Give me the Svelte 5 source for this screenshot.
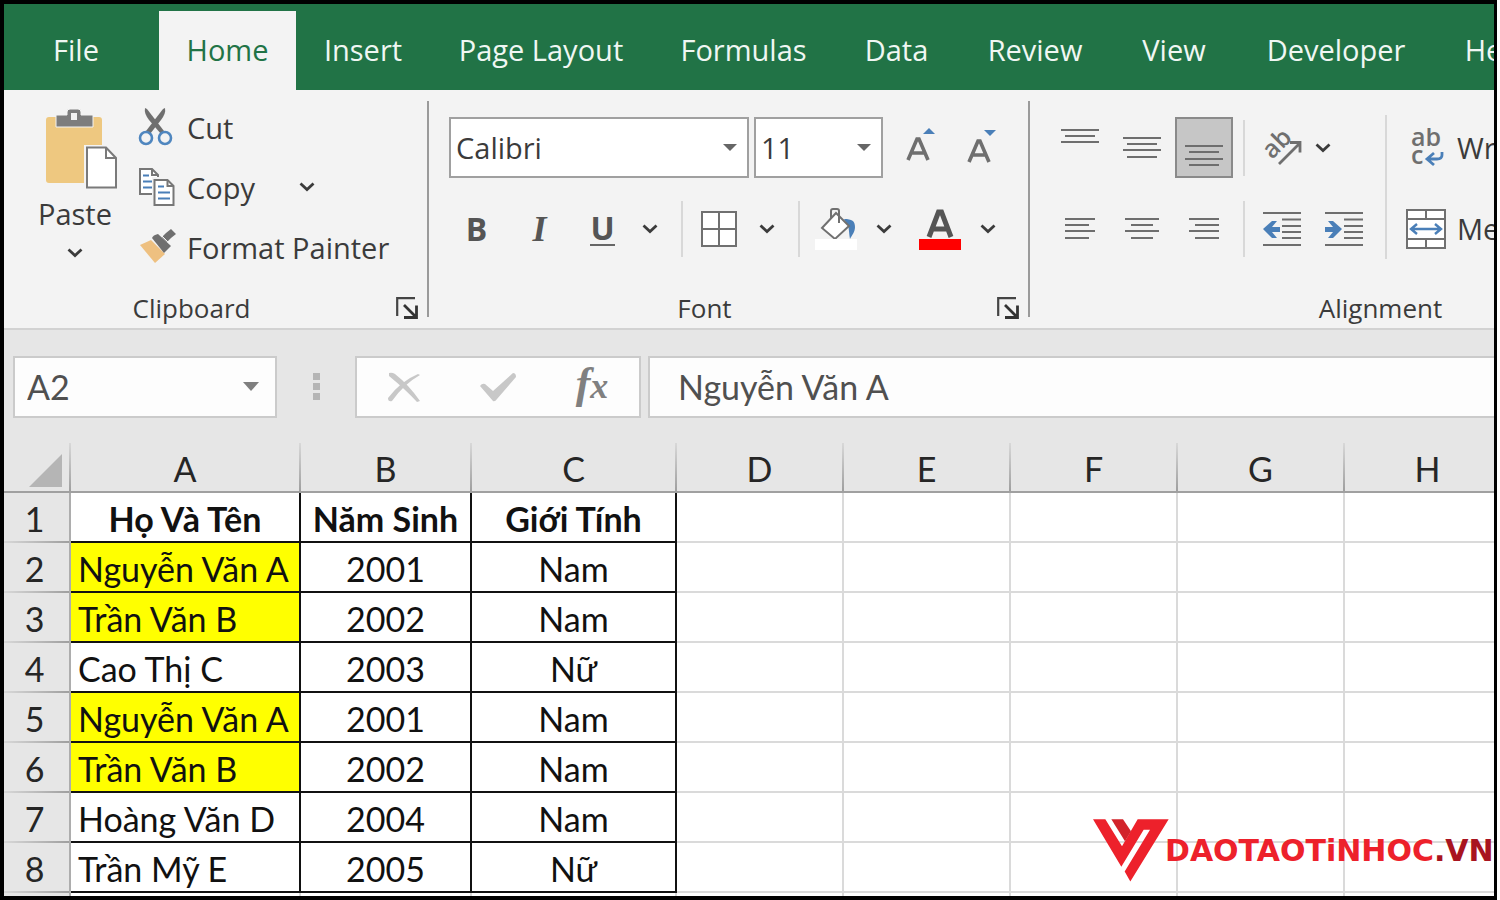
<script>
  const tabs = ['File', 'Home', 'Insert', 'Page Layout', 'Formulas', 'Data', 'Review', 'View', 'Developer', 'Help'];
  const columns = ['A', 'B', 'C', 'D', 'E', 'F', 'G', 'H'];
  const blanks = ['D', 'E', 'F', 'G', 'H'];
  const rows = [
    { name: 'Họ Và Tên', year: 'Năm Sinh', sex: 'Giới Tính', head: true },
    { name: 'Nguyễn Văn A', year: '2001', sex: 'Nam', mark: true },
    { name: 'Trần Văn B', year: '2002', sex: 'Nam', mark: true },
    { name: 'Cao Thị C', year: '2003', sex: 'Nữ' },
    { name: 'Nguyễn Văn A', year: '2001', sex: 'Nam', mark: true },
    { name: 'Trần Văn B', year: '2002', sex: 'Nam', mark: true },
    { name: 'Hoàng Văn D', year: '2004', sex: 'Nam' },
    { name: 'Trần Mỹ E', year: '2005', sex: 'Nữ' }
  ];
  let active = $state('Home');
  let formula = $state('Nguyễn Văn A');
  let cellName = $state('A2');
</script>

{#snippet chevron()}
  <svg width="16" height="10" viewBox="0 0 16 10" aria-hidden="true"><path d="M1.5 1.5 8 7.5 14.5 1.5" fill="none" stroke="#3b3b3b" stroke-width="2.8" /></svg>
{/snippet}

{#snippet launcher(label)}
  <button class="launcher" aria-label={label}>
    <svg width="22" height="22" viewBox="0 0 22 22" aria-hidden="true">
      <path d="M1.2 19V1.2H19" fill="none" stroke="#444" stroke-width="2.2" />
      <path d="M8 8 19 19M20.5 8.5V20.5H8" fill="none" stroke="#333" stroke-width="2.8" />
    </svg>
  </button>
{/snippet}

{#snippet lines(list)}
  <svg width="38" height="40" viewBox="0 0 38 40" aria-hidden="true">
    {#each list as [x, y, w]}<rect {x} {y} width={w} height="2" fill="#6e6e6e" />{/each}
  </svg>
{/snippet}

<div class="window">
  <nav class="tabs" aria-label="Ribbon tabs">
    {#each tabs as tab}
      <button class="tab" class:active={active === tab} onclick={() => (active = tab)}>{tab}</button>
    {/each}
  </nav>

  <section class="ribbon">
    <div class="group clipboard">
      <div class="body">
        <button class="paste">
          <svg width="72" height="81" viewBox="0 0 72 81" aria-hidden="true">
            <rect x="0" y="8" width="56" height="66" rx="3" fill="#eec880" />
            <path d="M10 6h11V3a3 3 0 0 1 3-3h8a3 3 0 0 1 3 3v3h12v12H10z" fill="#7d7d7d" stroke="#f3f3f3" stroke-width="1" />
            <rect x="25" y="4" width="6" height="7" fill="#f3f3f3" />
            <path d="M38 36h24v38H38z" fill="#f3f3f3" />
            <path d="M41 38.5h19l10 10.5v29.5H41z" fill="#fff" stroke="#7a7a7a" stroke-width="2" />
            <path d="M60 38.5v10.5h10" fill="none" stroke="#7a7a7a" stroke-width="2" />
          </svg>
          <span>Paste</span>
          {@render chevron()}
        </button>
        <div class="commands">
          <button class="command">
            <svg width="38" height="38" viewBox="0 0 38 38" aria-hidden="true">
              <path d="M7 0c-1 4 1 8 4 12l12 14 3-3L9 1z" fill="#6f6f6f" />
              <path d="M27 0c1 4-1 8-4 12L12 26l-4-3L25 1z" fill="#6f6f6f" />
              <circle cx="8" cy="30" r="6" fill="none" stroke="#4f86bf" stroke-width="2.6" />
              <circle cx="27" cy="30" r="6" fill="none" stroke="#4f86bf" stroke-width="2.6" />
            </svg>
            <span>Cut</span>
          </button>
          <div class="pair">
            <button class="command">
              <svg width="38" height="38" viewBox="0 0 38 38" aria-hidden="true">
                <path d="M2 1h12l6 6v19H2z" fill="#fff" stroke="#777" stroke-width="2" />
                <path d="M14 1v6h6" fill="none" stroke="#777" stroke-width="2" />
                <path d="M5 7.5h6M5 13.5h9M5 19.5h9" stroke="#4a7fb8" stroke-width="2" />
                <path d="M14 9h16v28H14z" fill="#f3f3f3" />
                <path d="M16.500 12h13l6 6v19h-19z" fill="#fff" stroke="#777" stroke-width="2" />
                <path d="M29.500 12v6h6" fill="none" stroke="#777" stroke-width="2" />
                <path d="M20 18.500h6M20 24.500h12M20 30.500h12" stroke="#4a7fb8" stroke-width="2" />
              </svg>
              <span>Copy</span>
            </button>
            <button class="arrow" aria-label="Copy options">{@render chevron()}</button>
          </div>
          <button class="command">
            <svg width="38" height="38" viewBox="0 0 38 38" aria-hidden="true">
              <path d="M2 17 13 12 27 26 17 35z" fill="#eec080" />
              <path d="M14 10q1-3 6-4L33 18l-7 7z" fill="#6f6f6f" />
              <path d="M24 9 28 5 33 1l5 5-5 4-4 4z" fill="#6f6f6f" />
              <path d="M23 7l8 8" stroke="#f3f3f3" stroke-width="1" />
            </svg>
            <span>Format Painter</span>
          </button>
        </div>
      </div>
      <div class="footer"><span>Clipboard</span>{@render launcher('Clipboard settings')}</div>
    </div>
    <i class="divider"></i>

    <div class="group font">
      <div class="body stack">
        <div class="line">
          <label class="combo family">
            <select aria-label="Font"><option>Calibri</option></select>
            <svg width="14" height="7" viewBox="0 0 14 7" aria-hidden="true"><path d="M0 0h14L7 7z" fill="#666" /></svg>
          </label>
          <label class="combo size">
            <select aria-label="Font size"><option>11</option></select>
            <svg width="14" height="7" viewBox="0 0 14 7" aria-hidden="true"><path d="M0 0h14L7 7z" fill="#666" /></svg>
          </label>
          <div class="sizers">
            <button class="tool sizer" aria-label="Increase font size">
              <svg width="30" height="40" viewBox="0 0 30 40" aria-hidden="true">
                <path d="M2 32 11 11h2L22 32M6 25h12" fill="none" stroke="#6f6f6f" stroke-width="3.6" />
                <path d="M17 6h12l-6-6z" fill="#4a7fb8" />
              </svg>
            </button>
            <button class="tool sizer" aria-label="Decrease font size">
              <svg width="30" height="40" viewBox="0 0 30 40" aria-hidden="true">
                <path d="M2 34 11 13h2L22 34M6 27h12" fill="none" stroke="#6f6f6f" stroke-width="3.6" />
                <path d="M17 2h12l-6 6z" fill="#4a7fb8" />
              </svg>
            </button>
          </div>
        </div>
        <div class="line styles">
          <button class="tool letter bold">B</button>
          <button class="tool letter italic">I</button>
          <button class="tool letter under"><span>U</span></button>
          <button class="arrow" aria-label="Underline options">{@render chevron()}</button>
          <i class="bar"></i>
          <button class="tool wide" aria-label="Borders">
            <svg width="36" height="36" viewBox="0 0 36 36" aria-hidden="true">
              <path d="M1 1h34v34H1zM18 1v34M1 18h34" fill="#fff" stroke="#707070" stroke-width="2" />
            </svg>
          </button>
          <button class="arrow" aria-label="Border options">{@render chevron()}</button>
          <i class="bar"></i>
          <button class="tool wide" aria-label="Fill colour">
            <svg width="42" height="42" viewBox="0 0 42 42" aria-hidden="true">
              <path d="M29 11c8 0 11 2 11 8 0 5-3 8-5 12-1-6-1-11-2-13z" fill="#4a7fb8" />
              <path d="M21 5 34 18 20 31 7 20z" fill="#fff" stroke="#707070" stroke-width="2" />
              <path d="M16 11V3q0-2 2-2h4q2 0 2 2v12" fill="none" stroke="#707070" stroke-width="2" />
              <rect x="0" y="31" width="42" height="11" fill="#fff" />
            </svg>
          </button>
          <button class="arrow" aria-label="Fill colour options">{@render chevron()}</button>
          <button class="tool wide ink" aria-label="Font colour">
            <svg width="42" height="42" viewBox="0 0 42 42" aria-hidden="true">
              <path d="M10 29 19.500 4h3L32 29M13 21h16" fill="none" stroke="#555" stroke-width="5" />
              <rect x="0" y="31" width="42" height="11" fill="#f00" />
            </svg>
          </button>
          <button class="arrow" aria-label="Font colour options">{@render chevron()}</button>
        </div>
      </div>
      <div class="footer"><span>Font</span>{@render launcher('Font settings')}</div>
    </div>
    <i class="divider"></i>

    <div class="group alignment">
      <div class="body">
        <div class="stack">
          <div class="line">
            <button class="tool" aria-label="Top align">{@render lines([[0, 1, 38], [4, 7, 30], [0, 13, 38]])}</button>
            <button class="tool" aria-label="Middle align">{@render lines([[0, 9, 38], [4, 15, 30], [0, 21, 38], [4, 28, 30]])}</button>
            <button class="tool pressed" aria-label="Bottom align" aria-pressed="true">{@render lines([[0, 17, 38], [4, 23, 30], [0, 30, 38], [4, 36, 30]])}</button>
            <i class="bar"></i>
            <button class="tool" aria-label="Orientation">
              <svg width="40" height="38" viewBox="0 0 40 38" aria-hidden="true">
                <text x="0" y="0" transform="translate(10 31) rotate(-45)" class="glyph">ab</text>
                <path d="M17 35 37 15M28 13.5h10v10" fill="none" stroke="#6f6f6f" stroke-width="2.8" />
              </svg>
            </button>
            <button class="arrow slim" aria-label="Orientation options">{@render chevron()}</button>
          </div>
          <div class="line">
            <button class="tool" aria-label="Align left">{@render lines([[4, 9, 30], [4, 15, 24], [4, 21, 30], [4, 28, 24]])}</button>
            <button class="tool" aria-label="Centre">{@render lines([[2, 9, 34], [8, 15, 22], [2, 21, 34], [8, 28, 22]])}</button>
            <button class="tool" aria-label="Align right">{@render lines([[4, 9, 30], [10, 15, 24], [4, 21, 30], [10, 28, 24]])}</button>
            <i class="bar"></i>
            <button class="tool" aria-label="Decrease indent">
              <svg width="38" height="34" viewBox="0 0 38 34" aria-hidden="true">
                <path d="M0 1h38M19 7.500h19M19 14h19M19 20h19M19 26h19M0 33h38" stroke="#6e6e6e" stroke-width="2" />
                <path d="M0 17 9 9h5l-5 6h8v5H9l5 6H9z" fill="#4a7fb8" />
              </svg>
            </button>
            <button class="tool" aria-label="Increase indent">
              <svg width="38" height="34" viewBox="0 0 38 34" aria-hidden="true">
                <path d="M0 1h38M19 7.500h19M19 14h19M19 20h19M19 26h19M0 33h38" stroke="#6e6e6e" stroke-width="2" />
                <path d="M17 17 8 9H3l5 6H0v5h8l-5 6h5z" fill="#4a7fb8" />
              </svg>
            </button>
          </div>
        </div>
        <i class="bar tall"></i>
        <div class="stack">
          <button class="command">
            <svg width="40" height="40" viewBox="0 0 40 40" aria-hidden="true">
              <text x="5" y="18" class="glyph">ab</text>
              <text x="5" y="36" class="glyph">c</text>
              <path d="M36 24v3q0 4-5 4h-9M28 25l-7 6 7 6" fill="none" stroke="#4a7fb8" stroke-width="2.8" />
            </svg>
            <span>Wrap Text</span>
          </button>
          <button class="command">
            <svg width="40" height="40" viewBox="0 0 40 40" aria-hidden="true">
              <path d="M1 1h38v38H1zM1 10h38M1 30h38M20 1v9M20 30v9" fill="#fff" stroke="#707070" stroke-width="2" />
              <path d="M6 20h28M11 15l-6 5 6 5M29 15l6 5-6 5" fill="none" stroke="#4a7fb8" stroke-width="2.4" />
            </svg>
            <span>Merge &amp; Center</span>
          </button>
        </div>
      </div>
      <div class="footer"><span>Alignment</span></div>
    </div>
  </section>

  <section class="formulas">
    <div class="namebox">
      <input aria-label="Name box" bind:value={cellName} />
      <button aria-label="Named cells">
        <svg width="16" height="9" viewBox="0 0 16 9" aria-hidden="true"><path d="M0 0h16L8 9z" fill="#7f7f7f" /></svg>
      </button>
    </div>
    <i class="grip"></i>
    <div class="actions">
      <button aria-label="Cancel">
        <svg width="34" height="30" viewBox="0 0 34 30" aria-hidden="true">
          <path d="M2 1q3-1 6 1Q22 13 33 29l-3 1Q18 17 2 4z" fill="#c8c8c8" />
          <path d="M33 3Q17 12 5 29q-4 1-4-3Q14 9 31 2z" fill="#c8c8c8" />
        </svg>
      </button>
      <button aria-label="Enter">
        <svg width="36" height="30" viewBox="0 0 36 30" aria-hidden="true">
          <path d="M0 14q2-3 5-2l8 7L33 1q3 0 3 4L17 27q-2 3-4 2z" fill="#c8c8c8" />
        </svg>
      </button>
      <button class="fx" aria-label="Insert function"><span>f</span><small>x</small></button>
    </div>
    <input class="entry" aria-label="Formula bar" bind:value={formula} />
  </section>

  <table>
    <colgroup>
      <col class="c-num" /><col class="c-a" /><col class="c-b" /><col class="c-c" />
      {#each blanks as b}<col class="c-rest" />{/each}
    </colgroup>
    <thead>
      <tr>
        <td class="corner"><svg width="33" height="33" viewBox="0 0 33 33" aria-hidden="true"><path d="M33 0v33H0z" fill="#b5b5b5" /></svg></td>
        {#each columns as c}<th scope="col">{c}</th>{/each}
      </tr>
    </thead>
    <tbody>
      {#each rows as row, i}
        <tr class:head={row.head}>
          <th scope="row">{i + 1}</th>
          <td class="data name" class:mark={row.mark}>{row.name}</td>
          <td class="data">{row.year}</td>
          <td class="data">{row.sex}</td>
          {#each blanks as b}<td></td>{/each}
        </tr>
      {/each}
      <tr>
        <th></th><td></td><td></td><td></td>
        {#each blanks as b}<td></td>{/each}
      </tr>
    </tbody>
  </table>

  <a class="brand" href="#top" aria-label="daotaotinhoc.vn">
    <svg width="76" height="63" viewBox="0 0 228 188" aria-hidden="true">
      <path d="M0 0h37l50 81L134 0h93L112 187 95 157 171 32h-19L85 143z" fill="#ed212b" />
      <path d="M55 0h35l24 36-18 30z" fill="#d2232a" />
    </svg>
    <span>DAOTAOTiNHOC<b>.VN</b></span>
  </a>
</div>

<style>
  :global(body) {
    margin: 0;
    background: #fff;
  }
  .window {
    --ui: 'Open Sans', 'Noto Sans', sans-serif;
    --cell: Lato, 'Open Sans', sans-serif;
    position: relative;
    box-sizing: border-box;
    height: 100vh;
    margin-right: 3px;
    border: 4px solid #000;
    border-right-width: 3px;
    overflow: hidden;
    background: #fff;
    font-family: var(--ui);
    font-size: 29px;
    color: #3b3b3b;
  }
  button, input, select {
    margin: 0;
    padding: 0;
    border: 0;
    border-radius: 0;
    background: none;
    font: inherit;
    color: inherit;
    outline: none;
  }
  svg {
    display: block;
    flex: none;
  }
  .tabs {
    display: grid;
    grid-template-columns: 144px 148px 134px 222px 183px 123px 154px 124px 200px 120px;
    height: 86px;
    background: #217346;
  }
  .tab {
    margin-top: 7px;
    padding-bottom: 2px;
    color: #f0f7f3;
    white-space: nowrap;
  }
  .tab.active {
    margin-left: 11px;
    background: #f3f3f3;
    color: #217346;
  }
  .ribbon {
    display: flex;
    height: 238px;
    border-bottom: 2px solid #d2d2d2;
    background: #f3f3f3;
  }
  .group {
    display: flex;
    flex: none;
    flex-direction: column;
    padding-top: 7px;
  }
  .clipboard { width: 423px; }
  .font { width: 599px; }
  .alignment { width: 701px; }
  .divider {
    flex: none;
    width: 2px;
    margin: 11px 0;
    background: #9a9a9a;
  }
  .body {
    display: flex;
    height: 180px;
  }
  .footer {
    display: flex;
    flex: 1;
    align-items: center;
    padding-top: 10px;
    font-size: 26px;
  }
  .footer span {
    flex: 1;
    text-align: center;
  }
  .launcher {
    width: 48px;
    padding-left: 17px;
  }
  .paste {
    display: flex;
    flex-direction: column;
    align-items: center;
    width: 78px;
    margin-left: 32px;
    padding-top: 12px;
  }
  .paste svg:first-child { margin-left: 14px; }
  .paste span {
    line-height: 48px;
    margin-bottom: 10px;
  }
  .commands {
    display: grid;
    grid-template-rows: repeat(3, 60px);
    margin-left: 24px;
  }
  .command {
    display: flex;
    align-items: center;
    gap: 11px;
    white-space: nowrap;
  }
  .pair { display: flex; }
  .arrow {
    display: flex;
    align-items: center;
    justify-content: center;
    width: 32px;
  }
  .pair .arrow { margin-left: 36px; }
  .arrow.slim { width: 20px; }
  .stack {
    display: flex;
    flex-direction: column;
    padding-top: 10px;
  }
  .stack.body {
    height: 170px;
    padding-left: 20px;
  }
  .line {
    display: flex;
    align-items: center;
    height: 81px;
  }
  .styles { margin-left: -4px; }
  .combo {
    display: grid;
    box-sizing: border-box;
    height: 61px;
    border: 2px solid #a0a0a0;
    background: #fff;
  }
  .combo select, .combo svg { grid-area: 1 / 1; }
  .combo select {
    appearance: none;
    padding-left: 5px;
  }
  .combo svg {
    place-self: center end;
    margin-right: 10px;
    pointer-events: none;
  }
  .family { width: 300px; }
  .size {
    width: 129px;
    margin-left: 5px;
  }
  .sizers {
    display: flex;
    margin-left: 7px;
  }
  .tool {
    display: flex;
    align-items: center;
    justify-content: center;
    width: 62px;
    height: 61px;
  }
  .tool.sizer { width: 61px; }
  .tool.letter {
    width: 63px;
    font-size: 32px;
    font-weight: 700;
    color: #555;
  }
  .tool.italic {
    font-family: 'Liberation Serif', serif;
    font-size: 36px;
    font-style: italic;
  }
  .under span {
    border-bottom: 2px solid #666;
    line-height: 32px;
  }
  .tool.wide { width: 64px; }
  .tool.ink { margin-left: 8px; }
  .tool.pressed {
    box-sizing: border-box;
    width: 58px;
    margin: 0 2px;
    border: 2px solid #8a8a8a;
    background: #c6c6c6;
  }
  .bar {
    flex: none;
    width: 2px;
    height: 56px;
    margin: 0 4px 0 15px;
    background: #d8d8d8;
  }
  .alignment .bar { margin: 0 6px 0 8px; }
  .alignment .bar.tall {
    height: 144px;
    margin: 18px 19px 0 10px;
  }
  .alignment .stack:first-child { padding-left: 19px; }
  .alignment .command { height: 81px; }
  .glyph {
    font: 600 25px 'Open Sans', sans-serif;
    fill: #6f6f6f;
  }
  .formulas {
    display: flex;
    align-items: center;
    height: 113px;
    padding-left: 9px;
    background: #e6e6e6;
    font-family: var(--cell);
    font-size: 34px;
    color: #505050;
  }
  .namebox, .actions, .entry {
    display: flex;
    box-sizing: border-box;
    height: 62px;
    border: 2px solid #cbcbcb;
    background: #fdfdfd;
  }
  .namebox { width: 264px; }
  .namebox input {
    flex: 1;
    min-width: 0;
    padding-left: 12px;
  }
  .namebox button { width: 48px; }
  .namebox svg { margin: auto; }
  .grip {
    width: 7px;
    height: 27px;
    margin: 0 35px 0 36px;
    background: repeating-linear-gradient(#b5b5b5 0 7px, transparent 7px 10px);
  }
  .actions {
    width: 286px;
    justify-content: space-around;
  }
  .actions button {
    display: flex;
    align-items: center;
    justify-content: center;
    width: 92px;
  }
  .actions .fx {
    align-items: baseline;
    font-family: 'Liberation Serif', serif;
    font-style: italic;
    font-weight: 700;
    font-size: 44px;
    line-height: 52px;
    color: #808080;
  }
  .fx small { font-size: 36px; }
  .entry {
    flex: 1;
    min-width: 0;
    margin-left: 7px;
    padding-left: 28px;
    border-right: 0;
  }
  table {
    width: 1503px;
    border-spacing: 0;
    table-layout: fixed;
    font-family: var(--cell);
    font-size: 34px;
    line-height: 40px;
    color: #111;
  }
  .c-num { width: 67px; }
  .c-a { width: 230px; }
  .c-b { width: 171px; }
  .c-c { width: 205px; }
  .c-rest { width: 167px; }
  th, td {
    box-sizing: border-box;
    height: 50px;
    padding: 4px 0 0;
    border-right: 2px solid #dadada;
    border-bottom: 2px solid #dadada;
    text-align: center;
    font-weight: 400;
    white-space: nowrap;
  }
  th, .corner {
    background: #e6e6e6;
    color: #262626;
  }
  thead th, .corner {
    border-bottom-color: #a0a0a0;
    border-right: 0;
    background: linear-gradient(#d8d8d8, #9f9f9f) right / 2px 100% no-repeat #e6e6e6;
  }
  thead th { padding-right: 2px; }
  .corner svg { margin: 2px 0 0 25px; }
  tbody th {
    padding: 4px 4px 2px 0;
    border-right-color: #adadad;
    border-bottom: 0;
    background: linear-gradient(90deg, #d8d8d8, #9f9f9f) bottom / 100% 2px no-repeat #e6e6e6;
  }
  .data {
    border-color: #111;
  }
  .name {
    padding-left: 7px;
    text-align: left;
  }
  .mark { background: #ff0; }
  .head .data {
    padding-left: 0;
    text-align: center;
    font-weight: 700;
  }
  .brand {
    position: absolute;
    right: 0;
    bottom: 14px;
    display: flex;
    align-items: center;
    width: 401px;
    font: 700 30px 'DejaVu Sans', sans-serif;
    color: #ed212b;
    text-decoration: none;
  }
  .brand span { margin-left: -4px; }
  .brand b { color: #a81420; }
</style>
